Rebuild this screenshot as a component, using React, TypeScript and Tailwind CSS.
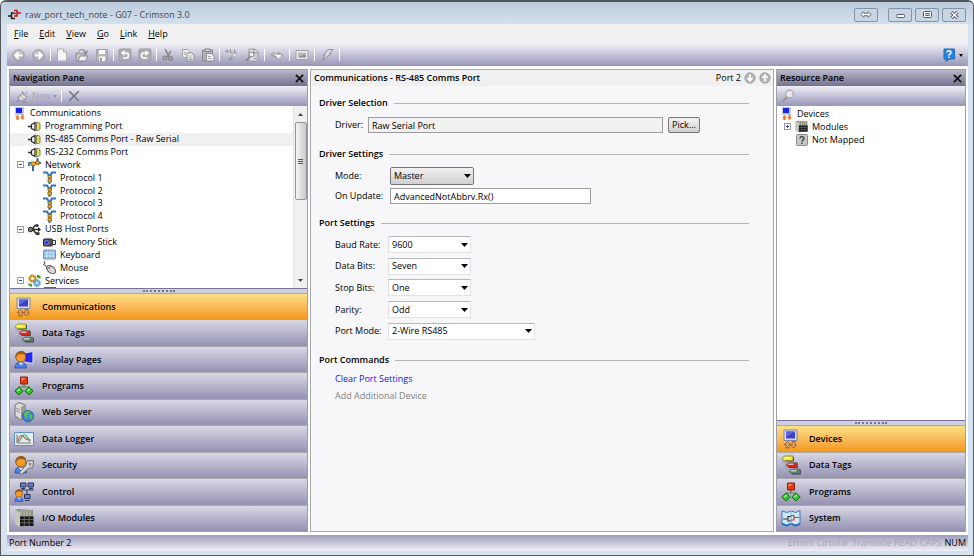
import type { ReactNode } from "react";

const G = "#8b8b90";

function Svg({ w, h = w, box, children }: { w: number; h?: number; box?: string; children: ReactNode }) {
  return (
    <svg width={w} height={h} viewBox={box ?? `0 0 ${w} ${h}`} className="block shrink-0" aria-hidden="true">
      {children}
    </svg>
  );
}

/* ---------- window and toolbar icons ---------- */

const LogoIcon = () => (
  <Svg w={13} h={11}>
    <path d="M0 7h4M6 4H3.500V9.500H7" fill="none" stroke="#222" strokeWidth="1.500" />
    <path d="M13 4H9.500M6 1.500h3v5.500H6M6 4.500h2" fill="none" stroke="#c4161c" strokeWidth="1.600" />
  </Svg>
);

const Round = ({ rotate }: { rotate: number }) => (
  <Svg w={13} box="0 0 14 14">
    <circle cx="7" cy="7" r="6.200" fill="#b4b4b8" stroke="#98989c" />
    <path d="M1.500 7a5.500 5.500 0 0 1 11 0" fill="#c6c6c9" />
    <path d="M11 7H4M7 3.500L3.500 7 7 10.500" fill="none" stroke="#fff" strokeWidth="2" transform={`rotate(${rotate} 7 7)`} />
  </Svg>
);

const NewFile = () => (
  <Svg w={14}>
    <path d="M2.500 1h6l3 3v9h-9z" fill="#f4f4f4" stroke="#b0b0b4" />
    <path d="M8.500 1v3h3" fill="#d0d0d0" stroke="#b0b0b4" />
  </Svg>
);
const OpenFile = () => (
  <Svg w={14}>
    <path d="M1 5h4l1 1h4v7H1z" fill="#c9c9cc" stroke={G} />
    <path d="M3 13l2-5h8l-2.500 5z" fill="#f0f0f0" stroke={G} />
    <path d="M4 3c3-3 6-1 7 2M12.500 2.500L11.200 6 8.500 4" fill="none" stroke={G} strokeWidth="1.200" />
  </Svg>
);
const SaveFile = () => (
  <Svg w={14}>
    <path d="M1.500 1.500h11v11h-11z" fill="#b8b8bc" stroke="#a0a0a5" />
    <path d="M4 2h6v4H4zM4 8.500h6V13H4z" fill="#fafafa" />
    <path d="M5 10h2v3H5z" fill="#96969b" />
  </Svg>
);
const Turn = ({ flip }: { flip?: boolean }) => (
  <Svg w={14}>
    <rect x="1" y="1" width="12" height="12" rx="1" fill="#adadb1" stroke="#9c9ca0" />
    <g transform={flip ? "translate(14 0) scale(-1 1)" : undefined}>
      <path d="M4.500 5H8a2.500 2.500 0 0 1 0 5H5" fill="none" stroke="#fff" strokeWidth="1.600" />
      <path d="M3 5l3.500-3v6z" fill="#fff" />
    </g>
  </Svg>
);
const Cut = () => (
  <Svg w={14}>
    <path d="M4 1l4.500 8M10 3L6 9" stroke="#8a8a8f" strokeWidth="1.600" />
    <circle cx="4" cy="10" r="1.800" fill="none" stroke="#88888d" strokeWidth="1.400" />
    <circle cx="9.500" cy="10.500" r="1.800" fill="none" stroke="#88888d" strokeWidth="1.400" />
  </Svg>
);
const Copy = () => (
  <Svg w={14}>
    <path d="M1.500 1.500h5l2 2v6h-7z" fill="#ededee" stroke="#a0a0a5" />
    <path d="M6 5h4.500L13 7v6H6z" fill="#f2f2f3" stroke="#909095" />
    <path d="M3 4.500h2M3 6.500h2M7.500 8h3M7.500 10h4M7.500 11.500h4" stroke="#a5a5aa" />
  </Svg>
);
const Paste = () => (
  <Svg w={14}>
    <path d="M1.500 2h10v11h-10z" fill="#b2b2b6" stroke="#88888c" />
    <path d="M4 1h5v2.500H4z" fill="#d8d8da" stroke="#808085" />
    <path d="M5.500 5.500h5L13 8v5H5.500z" fill="#f3f3f4" stroke="#909095" />
    <path d="M7 8.500h3M7 10.500h4" stroke="#a5a5aa" />
  </Svg>
);
const FindAll = () => (
  <Svg w={14}>
    <path d="M1 4.500V2.500l1-1 1 1v2M1 3.500h2M5.500 1v3.500h2M9.500 1v3.500h2" fill="none" stroke="#909096" />
    <path d="M4 12.500l4-4" stroke="#96969b" strokeWidth="2" />
    <path d="M6.500 6l4 4M7 8l2-3 2.500 2.500-3 2z" fill="#f4f4f4" stroke="#b4b4b9" />
  </Svg>
);
const FindPage = () => (
  <Svg w={14}>
    <path d="M4 1h6l3 3v9H4z" fill="#e2e2e4" stroke="#98989d" />
    <path d="M9 1v4h4M10 8h2M9 10.500h3" fill="none" stroke="#88888d" />
    <circle cx="6.500" cy="6.500" r="2.500" fill="#f4f4f4" stroke="#7d7d82" />
    <path d="M5 8.500l-4 4.500" stroke="#85858a" strokeWidth="1.800" />
  </Svg>
);
const Hand = () => (
  <Svg w={14}>
    <path d="M0 6l3-2 3 1 3-1 5 3-3 3-4 1.500-3-2-4-1z" fill="#b0b0b4" />
    <path d="M4 6l3 2 2-2 2 2-3 2z" fill="#fafafa" stroke="#fafafa" />
    <path d="M4 7.500l3 2M8 5.500l2 1" stroke="#88888d" />
  </Svg>
);
const Picture = () => (
  <Svg w={14}>
    <path d="M1 2.500h12v9H1z" fill="#f1f1f2" stroke="#9d9da2" />
    <path d="M3 4.500h8v5H3z" fill="#b9b9bd" />
    <path d="M3 9.500l4-2 4-1v3z" fill="#909095" />
  </Svg>
);
const Bolt = () => (
  <Svg w={14}>
    <path d="M8 1.500h5L9.500 5.500H11L2 13l3-5.500H3.500z" fill="#dcdcde" stroke="#909095" />
  </Svg>
);
const HelpIcon = () => (
  <Svg w={12} h={14}>
    <path d="M1 1h10.500v10H6l-3 2.500V11H1z" fill="#2783dc" stroke="#1c6ac0" />
    <path d="M4 4.500C4 2 8 2 8 4.500 8 6 6 5.700 6 7.500M6 8.500V10" fill="none" stroke="#fff" strokeWidth="1.500" />
  </Svg>
);
const PlugIcon = () => (
  <Svg w={13}>
    <path d="M1 12l3-3M7 1l2 3M11 4l1-2" stroke="#8f8f94" />
    <path d="M3 7l5-4 4 4-4 4-4 .500z" fill="#c6c6ca" stroke="#919196" />
    <path d="M5 7l2 2M7 5l3 3" stroke="#fff" />
    <path d="M8 12h4" stroke="#919196" strokeWidth="1.500" />
  </Svg>
);
const MagIcon = () => (
  <Svg w={14}>
    <circle cx="8.500" cy="5" r="3.800" fill="#e9e9ee" stroke="#a2a2a6" strokeWidth="1.200" />
    <path d="M6 8l-5 5" stroke="#96969b" strokeWidth="1.800" />
  </Svg>
);
const Cross = ({ color = "#111", w = 9, sw = 2 }: { color?: string; w?: number; sw?: number }) => (
  <Svg w={w} box="0 0 10 10">
    <path d="M1 1l8 8M9 1L1 9" stroke={color} strokeWidth={sw} />
  </Svg>
);

/* ---------- tree icons (13px) ---------- */

const PcSmall = () => (
  <Svg w={12} h={13}>
    <path d="M1 0h9v8H1z" fill="#c3c6dd" />
    <path d="M2 1h6v5H2z" fill="#1525e8" />
    <path d="M3.500 8L6 10.500H4.700V13H2.300v-2.500H1zM8.500 13L6 10.500h1.300V8h2.400v2.500H11z" fill="#ee7f22" />
  </Svg>
);
const PortSmall = () => (
  <Svg w={13}>
    <path d="M0 6.500h4" stroke="#333" strokeWidth="1.600" />
    <path d="M7 2.500v8L3.500 8.500v-4z" fill="#fff" stroke="#222" strokeWidth="1.200" />
    <path d="M8.500 2.500h2l1.500 1v6l-1.500 1h-2z" fill="#e6de5a" stroke="#66663a" strokeWidth=".8" />
  </Svg>
);
const NetSmall = () => (
  <Svg w={13}>
    <path d="M0 5h13M5 5v8M9.500 0v5" stroke="#2b6cb8" strokeWidth="2" />
    <path d="M3 4h4v3.500H3zM8 3h3v3.500H8z" fill="#f3b32c" stroke="#8a5a10" strokeWidth=".8" />
    <path d="M0 4h2v4H0z" fill="#3b83cf" />
  </Svg>
);
const ProtoSmall = () => (
  <Svg w={13}>
    <path d="M0 1.500h4l2.500 4 2.500-4h4M6.500 5v8" fill="none" stroke="#2f74bd" strokeWidth="2" />
    <path d="M5 4.500h3.500v2.500H5zM5 8h3.500v3H5z" fill="#f0b030" stroke="#7a5a20" strokeWidth=".8" />
  </Svg>
);
const UsbSmall = () => (
  <Svg w={13}>
    <path d="M2 6.500h10M4 6.500l3-4h2.500M5 6.500l3 4h2" fill="none" stroke="#333" strokeWidth="1.600" />
    <circle cx="2.500" cy="6.500" r="2.300" fill="#777" stroke="#222" />
    <path d="M10 4l3 2.500L10 9z" fill="#222" />
    <circle cx="9" cy="2.500" r="1.600" fill="#333" />
    <path d="M8 9.200h3.500V12H8z" fill="#333" />
  </Svg>
);
const StickSmall = () => (
  <Svg w={13}>
    <rect x=".5" y="3" width="9" height="7" rx="1" fill="#55555d" stroke="#222" />
    <circle cx="3.500" cy="6.500" r="2" fill="#2323ef" stroke="#9fa4ff" strokeWidth=".7" />
    <path d="M9.500 4.500h3v4h-3z" fill="#e8e8e8" stroke="#333" />
  </Svg>
);
const KeySmall = () => (
  <Svg w={13}>
    <rect x=".5" y="2" width="12" height="9" rx="1" fill="#7eb2e0" stroke="#8a8f98" />
    <path d="M1 5h11M1 8h11M4 2.500v8M7 2.500v8M10 2.500v8" stroke="#d9edfb" strokeWidth=".9" />
  </Svg>
);
const MouseSmall = () => (
  <Svg w={13}>
    <path d="M1 0l1 2-1.500 1.500L3 5" fill="none" stroke="#444" />
    <ellipse cx="8" cy="8.500" rx="5.200" ry="3.200" transform="rotate(38 8 8.500)" fill="#d8d8d8" stroke="#555" />
    <path d="M4 8l4-3M4 5.500l3 2" stroke="#666" strokeWidth=".8" />
  </Svg>
);
const GearsSmall = () => (
  <Svg w={13}>
    <circle cx="4.500" cy="4.500" r="3" fill="#f3cf78" stroke="#d0901a" strokeWidth="2.600" strokeDasharray="1.700 .6" />
    <circle cx="4.500" cy="4.500" r="2.600" fill="none" stroke="#c98a14" />
    <circle cx="4.500" cy="4.500" r="1.200" fill="#fff" />
    <circle cx="9" cy="9" r="2.600" fill="#cfe6fa" stroke="#3f92dc" strokeWidth="2.400" strokeDasharray="1.500 .5" />
    <path d="M9 .500l3.500 1.500v3L9 3.500zM.500 9L4 10.500V13L.500 11.500z" fill="#35a03a" />
  </Svg>
);
const RackSmall = () => (
  <Svg w={13} box="0 0 20 20">
    <Rack />
  </Svg>
);
const UnknownSmall = () => (
  <Svg w={12}>
    <rect x=".5" y=".5" width="11" height="11" rx="1" fill="#c8c8c8" stroke="#8a8a8a" />
    <path d="M4 4.500C4 2 8 2 8 4.500 8 6 6 5.700 6 7.500M6 8.500V10" fill="none" stroke="#333" strokeWidth="1.300" />
  </Svg>
);

/* ---------- category icons (20px) ---------- */

const Rack = () => (
  <>
    <path d="M1 2l4-1 14 1v15l-12 2-6-3z" fill="#8d9181" />
    <path d="M1 2l5 2v15l-5-3z" fill="#c5c9b9" />
    <path d="M7 2v6M10 2v6M13 2v6M16 2v6" stroke="#c3c6ba" />
    <path d="M6 8.500h13.500V18H6z" fill="#161616" />
    <path d="M6 11.500h13M6 14.800h13M10.300 9v9M15 9v9" stroke="#777" strokeWidth=".8" />
  </>
);
const PcIcon = () => (
  <Svg w={20}>
    <path d="M3 1h13v10.500H3z" fill="#dcdcea" stroke="#8485a5" />
    <path d="M5 2.500h9v7H5z" fill="#3a42cf" />
    <path d="M5 2.500h9L5 8z" fill="#6067dc" />
    <path d="M6.500 12.500l3 3H8V19H5v-3.500H3.500zM12.500 19l-3-3H11v-3.500h3V16h1.500z" fill="#e0a36c" stroke="#8a5128" strokeWidth=".8" />
  </Svg>
);
const Tag = ({ x, y, c }: { x: number; y: number; c: string }) => (
  <g transform={`translate(${x} ${y})`}>
    <path d="M2.500 0H11v5H2.500L0 2.500z" fill={c} stroke="#6b6b6b" strokeWidth=".7" />
    <path d="M2.500 1h5v1.500H1.500z" fill="#fff" opacity=".65" />
    <path d="M3 5h8.500V1" fill="none" stroke="#333" strokeWidth=".7" />
  </g>
);
const TagsIcon = () => (
  <Svg w={20}>
    <path d="M2 3v4l4 2M5 9v4l4 3" fill="none" stroke="#999" strokeWidth=".8" />
    <Tag x={1} y={1} c="#f7ec1b" />
    <Tag x={5} y={7.5} c="#d9261c" />
    <Tag x={8} y={14} c="#5f7f6c" />
  </Svg>
);
const Person = () => (
  <>
    <path d="M1 18c0-4 2-6 5.500-6s6 2 6 6z" fill="#4a7de8" stroke="#244a9c" strokeWidth=".8" />
    <path d="M4.500 12.500l2.500 3 2.500-3z" fill="#dbe8ff" />
    <circle cx="6.800" cy="7" r="5" fill="#f59a2a" stroke="#8d4a0b" strokeWidth=".8" />
    <path d="M1.500 8C1 3 4 1 7 1s5.500 1.500 5 5C10 3.500 6 4 4 4.500z" fill="#9a5a18" />
  </>
);
const DisplayIcon = () => (
  <Svg w={20}>
    <path d="M10 3l9-1.500v12L10 12z" fill="#2727f2" stroke="#d8d8f4" strokeWidth="1.200" />
    <Person />
  </Svg>
);
const ProgramsIcon = () => (
  <Svg w={20}>
    <path d="M10 7v4M5 15v-4h10v4" fill="none" stroke="#4b8b45" strokeWidth="1.200" />
    <path d="M6.500 1h7v7h-7z" fill="#e93a18" stroke="#8f1c08" />
    <path d="M7.500 2h4L7.500 5z" fill="#ff8a68" />
    <path d="M5 11l4.200 4L5 19 .800 15zM15 11l4.200 4-4.200 4-4.200-4z" fill="#32c328" stroke="#14700f" />
    <path d="M5 12.500l1.500 1.500-3 1.500-1-.700zM15 12.500l1.500 1.500-3 1.500-1-.700z" fill="#90f088" />
  </Svg>
);
const ServerIcon = () => (
  <Svg w={20}>
    <path d="M1 3l4-2.500 6 2.500v13l-4 2-6-4z" fill="#dcdcdc" stroke="#6e6e6e" />
    <path d="M7 5l4-2v13l-4 2z" fill="#9b9b9b" />
    <path d="M2 6l4 2M2 8.500l4 2" stroke="#8a8a8a" />
    <circle cx="14" cy="14" r="5.500" fill="#3d86e0" stroke="#184a90" strokeWidth=".8" />
    <path d="M10 11c2-2 4-2.500 6-2l-1 2.500-2 1 1 2-2 2c-1-1-2-3-2-5.500zM16 12l3 1-1 4-2 .500-.500-3z" fill="#5ec24a" />
  </Svg>
);
const LoggerIcon = () => (
  <Svg w={20}>
    <path d="M.500 3.500h19v13H.500z" fill="#e3edf6" stroke="#5d8fc6" />
    <path d="M3 5.500v8.500h14" fill="none" stroke="#555" strokeWidth=".8" />
    <path d="M3.500 12c2-6 4-7 7-3.500s4 2 6 2.500" fill="none" stroke="#e0564a" strokeWidth="1.200" />
    <path d="M3.500 13c4-1 4-7.500 7-7.500s3 5 6 7" fill="none" stroke="#3fa55c" strokeWidth="1.200" />
  </Svg>
);
const SecurityIcon = () => (
  <Svg w={20}>
    <Person />
    <path d="M13 6l6.500-.500-.500 7-4.500 1-7 6-2-2 6-6.500z" fill="#d2d2d2" stroke="#6d6d6d" />
    <path d="M14.500 8l3 .500-1.500 3z" fill="#77777c" />
    <path d="M12.500 11.500L7 17" stroke="#fff" />
  </Svg>
);
const ControlIcon = () => (
  <Svg w={20}>
    <path d="M9.500 5.500V8M16.500 5.500V8M7 8h13M13 8v5" fill="none" stroke="#383e64" strokeWidth="1.200" />
    <path d="M6.500 1H12v4H6.500zM14 1h5.500v4H14zM10.500 12.500H16v4h-5.500z" fill="#6088c8" stroke="#2c3358" />
    <path d="M11 18.500h4.500M7 6.500h4M15 6.500h4" stroke="#2c3358" />
    <g transform="translate(0 6.500) scale(.72)">
      <Person />
    </g>
  </Svg>
);
const RackIcon = () => (
  <Svg w={20}>
    <Rack />
  </Svg>
);
const SystemIcon = () => (
  <Svg w={20}>
    <path d="M1 3l5 1.500 4-1.500 4.500 1.500L19 2.500v14L14.500 18 10 16l-4 2-5-1.500z" fill="#cfe8f8" stroke="#3f78bb" />
    <path d="M1 15.500l5 2 4-2 4.500 2 4.500-2" fill="none" stroke="#2c6cc0" strokeWidth="1.600" />
    <path d="M10 3v13" stroke="#7fb2dc" />
    <path d="M2 11h4M10 8.500H7v4.500h3" fill="none" stroke="#333" strokeWidth="1.200" />
    <path d="M10 7.500h3v4.500h-3M13 9.500h5" fill="none" stroke="#d03a30" strokeWidth="1.200" />
  </Svg>
);

/* ---------- shared pieces ---------- */

const Sep = () => <span className="h-3 w-px shrink-0 bg-white" />;

function PaneTitle({ children }: { children: string }) {
  return (
    <header className="flex h-4 shrink-0 items-center justify-between bg-linear-to-b from-[#b9b8cb] to-[#74728f] px-[3px] text-[#000]">
      <h2 className="font-semibold">{children}</h2>
      <button type="button" aria-label={`Close ${children}`}>
        <Cross />
      </button>
    </header>
  );
}

function Splitter() {
  return (
    <div className="flex h-[5px] shrink-0 items-center justify-center border-t border-[#77759a] bg-[#cfcfdf]">
      <span className="w-8 border-t-2 border-dotted border-[#77758c]" />
    </div>
  );
}

type Category = { label: string; icon: ReactNode };

function Categories({ items }: { items: Category[] }) {
  return (
    <nav className="grid auto-rows-fr">
      {items.map((c, i) => (
        <button
          type="button"
          key={c.label}
          className={`flex min-h-0 items-center gap-2 border-t border-[#a9a7a9] pl-1 text-left font-semibold ${
            i === 0 ? "bg-linear-to-b from-[#fbdf86] to-[#f39813]" : "bg-linear-to-b from-[#d9d8e6] to-[#9492b2]"
          }`}
        >
          {c.icon}
          <span>{c.label}</span>
        </button>
      ))}
    </nav>
  );
}

type Node = { label: string; icon: ReactNode; level: 0 | 1 | 2; box?: "+" | "-"; selected?: boolean };

const indent = { 0: "pl-[3px]", 1: "pl-[5px]", 2: "pl-[33px]" };

function TreeRow({ node }: { node: Node }) {
  return (
    <li className={`flex min-h-0 items-center ${indent[node.level]} ${node.selected ? "bg-[#f0f0f0]" : ""}`}>
      {node.level === 1 && (
        <span className="mr-1 flex w-[9px] justify-end">
          {node.box && (
            <Svg w={7}>
              <rect x=".5" y=".5" width="6" height="6" fill="#fff" stroke="#9a9aa8" />
              <path d={node.box === "+" ? "M2 3.500h3M3.500 2v3" : "M2 3.500h3"} stroke="#3a4d9a" />
            </Svg>
          )}
        </span>
      )}
      <span className="flex w-[13px] justify-center">{node.icon}</span>
      <span className="ml-1 whitespace-nowrap">{node.label}</span>
    </li>
  );
}

function Heading({ children }: { children: string }) {
  return (
    <div className="flex h-4 items-center gap-[6px]">
      <h3 className="font-semibold">{children}</h3>
      <span className="h-px flex-1 bg-[#b5b5b8]" />
    </div>
  );
}

function Combo({ id, value, look, width }: { id: string; value: string; look: string; width: string }) {
  return (
    <span className={`relative block ${width}`}>
      <select id={id} defaultValue={value} className={`block w-full appearance-none border pl-[3px] ${look}`}>
        <option>{value}</option>
      </select>
      <svg width="7" height="4" viewBox="0 0 7 4" className="pointer-events-none absolute top-1/2 right-[3px] -translate-y-1/2" aria-hidden="true">
        <path d="M0 0h7L3.500 4z" fill="#000" />
      </svg>
    </span>
  );
}

const flat = "h-[17px] border-[#e0e2e8] border-t-[#b5b8c0] bg-white";

/* ---------- data ---------- */

const tree: Node[] = [
  { label: "Communications", icon: <PcSmall />, level: 0 },
  { label: "Programming Port", icon: <PortSmall />, level: 1 },
  { label: "RS-485 Comms Port - Raw Serial", icon: <PortSmall />, level: 1, selected: true },
  { label: "RS-232 Comms Port", icon: <PortSmall />, level: 1 },
  { label: "Network", icon: <NetSmall />, level: 1, box: "-" },
  { label: "Protocol 1", icon: <ProtoSmall />, level: 2 },
  { label: "Protocol 2", icon: <ProtoSmall />, level: 2 },
  { label: "Protocol 3", icon: <ProtoSmall />, level: 2 },
  { label: "Protocol 4", icon: <ProtoSmall />, level: 2 },
  { label: "USB Host Ports", icon: <UsbSmall />, level: 1, box: "-" },
  { label: "Memory Stick", icon: <StickSmall />, level: 2 },
  { label: "Keyboard", icon: <KeySmall />, level: 2 },
  { label: "Mouse", icon: <MouseSmall />, level: 2 },
  { label: "Services", icon: <GearsSmall />, level: 1, box: "-" },
];

const resources: Node[] = [
  { label: "Devices", icon: <PcSmall />, level: 0 },
  { label: "Modules", icon: <RackSmall />, level: 1, box: "+" },
  { label: "Not Mapped", icon: <UnknownSmall />, level: 1 },
];

const navItems: Category[] = [
  { label: "Communications", icon: <PcIcon /> },
  { label: "Data Tags", icon: <TagsIcon /> },
  { label: "Display Pages", icon: <DisplayIcon /> },
  { label: "Programs", icon: <ProgramsIcon /> },
  { label: "Web Server", icon: <ServerIcon /> },
  { label: "Data Logger", icon: <LoggerIcon /> },
  { label: "Security", icon: <SecurityIcon /> },
  { label: "Control", icon: <ControlIcon /> },
  { label: "I/O Modules", icon: <RackIcon /> },
];

const resourceItems: Category[] = [
  { label: "Devices", icon: <PcIcon /> },
  { label: "Data Tags", icon: <TagsIcon /> },
  { label: "Programs", icon: <ProgramsIcon /> },
  { label: "System", icon: <SystemIcon /> },
];

const toolGroups: { name: string; icon: ReactNode }[][] = [
  [
    { name: "Back", icon: <Round rotate={0} /> },
    { name: "Forward", icon: <Round rotate={180} /> },
  ],
  [
    { name: "New", icon: <NewFile /> },
    { name: "Open", icon: <OpenFile /> },
    { name: "Save", icon: <SaveFile /> },
  ],
  [
    { name: "Undo", icon: <Turn /> },
    { name: "Redo", icon: <Turn flip /> },
  ],
  [
    { name: "Cut", icon: <Cut /> },
    { name: "Copy", icon: <Copy /> },
    { name: "Paste", icon: <Paste /> },
  ],
  [
    { name: "Find all", icon: <FindAll /> },
    { name: "Find in page", icon: <FindPage /> },
  ],
  [{ name: "Browse", icon: <Hand /> }],
  [{ name: "Picture", icon: <Picture /> }],
  [{ name: "Send", icon: <Bolt /> }],
];

const portSettings = [
  { id: "baud", label: "Baud Rate:", value: "9600", width: "w-[83px]" },
  { id: "bits", label: "Data Bits:", value: "Seven", width: "w-[83px]" },
  { id: "stop", label: "Stop Bits:", value: "One", width: "w-[83px]" },
  { id: "parity", label: "Parity:", value: "Odd", width: "w-[83px]" },
  { id: "portmode", label: "Port Mode:", value: "2-Wire RS485", width: "w-[147px]" },
];

const menus = ["File", "Edit", "View", "Go", "Link", "Help"];

const capButton = "flex h-[14px] w-6 items-center justify-center rounded-xs border border-[#8593a6] bg-[#c7d5e5]";
const strip = "bg-linear-to-b from-[#f1f0f6] to-[#9896b8]";

export default function App() {
  return (
    <div className="h-screen bg-white pb-1 font-['Open_Sans','Noto_Sans',sans-serif] text-[9px] leading-3 text-[#000]">
      <div className="flex h-full flex-col rounded-t-md border border-t-2 border-[#55575c] bg-[#d5e3f1] pr-[5px] pb-1 pl-[6px]">
        <div className="-mr-[5px] -ml-[6px] flex h-[22px] shrink-0 items-center rounded-t-sm bg-linear-to-b from-[#bccbdb] to-[#d3e1ef] pt-[3px] pr-[7px] pl-[7px]">
          <LogoIcon />
          <h1 className="ml-1 text-[#3c4653]">raw_port_tech_note - G07 - Crimson 3.0</h1>
          <div className="ml-auto flex gap-[3px]">
            <button type="button" aria-label="Resize" className={`mr-[7px] ${capButton}`}>
              <Svg w={12} h={7}>
                <path d="M.700 3.500L4 .700v1.600h4V.700l3.300 2.800L8 6.300V4.700H4v1.600z" fill="#fff" stroke="#667" strokeWidth=".9" />
              </Svg>
            </button>
            <button type="button" aria-label="Minimize" className={capButton}>
              <Svg w={9} h={7}>
                <rect x=".5" y="3.500" width="8" height="3" rx="1" fill="#fff" stroke="#556" />
              </Svg>
            </button>
            <button type="button" aria-label="Maximize" className={capButton}>
              <Svg w={9} h={7}>
                <rect x=".5" y=".5" width="8" height="6" rx="1" fill="#fff" stroke="#556" />
                <rect x="3" y="2.500" width="3" height="2" fill="#dde" stroke="#556" />
              </Svg>
            </button>
            <button type="button" aria-label="Close" className={capButton}>
              <Svg w={9} h={8}>
                <path d="M1.500 1l6 6M7.500 1l-6 6" stroke="#556" strokeWidth="3.200" />
                <path d="M1.700 1.200l5.600 5.600M7.300 1.200L1.700 6.800" stroke="#fff" strokeWidth="1.400" />
              </Svg>
            </button>
          </div>
        </div>

        <nav className="flex h-5 shrink-0 items-center gap-[11px] bg-[#f0f0f0] pl-[7px]">
          {menus.map((m) => (
            <button type="button" key={m}>
              <u>{m[0]}</u>
              {m.slice(1)}
            </button>
          ))}
        </nav>

        <div className={`flex h-[22px] shrink-0 items-center pr-[5px] pl-1 ${strip}`}>
          {toolGroups.map((group, i) => (
            <div key={i} className="flex items-center">
              <div className={`flex gap-[6px] ${i > 3 ? "px-[5px]" : i > 0 ? "px-1" : "pr-[5px]"}`}>
                {group.map((t) => (
                  <button type="button" key={t.name} aria-label={t.name} className="flex w-[14px] justify-center">
                    {t.icon}
                  </button>
                ))}
              </div>
              <Sep />
            </div>
          ))}
          <button type="button" aria-label="Help" className="ml-auto flex items-center gap-1">
            <HelpIcon />
            <Svg w={4} h={3}>
              <path d="M0 0h4L2 3z" fill="#000" />
            </Svg>
          </button>
        </div>

        <div className="flex min-h-0 flex-1 gap-[2px] bg-white px-[2px] pt-[3px] pb-[3px]">
          <aside className="flex w-[299px] shrink-0 flex-col border border-[#9d9dab] bg-white">
            <PaneTitle>Navigation Pane</PaneTitle>
            <div className={`flex h-5 shrink-0 items-center pl-[5px] ${strip}`}>
              <PlugIcon />
              <button type="button" className="mr-1 ml-1 flex items-center gap-[2px] text-[#a3a2b4]">
                New
                <Svg w={4} h={3}>
                  <path d="M0 0h4L2 3z" fill="#96959f" />
                </Svg>
              </button>
              <Sep />
              <button type="button" aria-label="Delete" className="ml-[6px]">
                <Cross color="#75757c" w={12} sw={1.3} />
              </button>
            </div>
            <div className="flex min-h-0 flex-1">
              <div className="min-w-0 flex-1 overflow-hidden pt-px">
                <ul className="grid h-[180px] auto-rows-fr">
                  {tree.map((n) => (
                    <TreeRow key={n.label} node={n} />
                  ))}
                </ul>
                <div className="ml-[34px] h-1 w-3 bg-[#b83a40]" />
              </div>
              <div className="flex w-[14px] flex-col items-center border-l border-[#e4e4e4] bg-[#f0f0f0]">
                <span className="flex h-4 items-center">
                  <Svg w={5} h={3}>
                    <path d="M0 3h5L2.500 0z" fill="#444" />
                  </Svg>
                </span>
                <div className="flex h-[78px] w-3 flex-col items-center justify-center gap-px rounded-xs border border-[#94949a] bg-linear-to-r from-[#f5f5f5] to-[#c9c9ce]">
                  <span className="h-px w-[5px] bg-[#555]" />
                  <span className="h-px w-[5px] bg-[#555]" />
                  <span className="h-px w-[5px] bg-[#555]" />
                </div>
                <span className="mt-auto flex h-4 items-center">
                  <Svg w={5} h={3}>
                    <path d="M0 0h5L2.500 3z" fill="#444" />
                  </Svg>
                </span>
              </div>
            </div>
            <Splitter />
            <div className="grid h-[238px] shrink-0">
              <Categories items={navItems} />
            </div>
          </aside>

          <main className="min-w-0 flex-1 border border-[#a9a9b0] bg-[#f7f7f9]">
            <header className="flex h-4 items-center gap-[3px] bg-[#f0f0f0] pr-[2px] pl-[3px]">
              <h2 className="mr-auto font-semibold">Communications - RS-485 Comms Port</h2>
              <span>Port 2</span>
              <button type="button" aria-label="Next port">
                <Svg w={12} box="0 0 14 14">
                  <circle cx="7" cy="7" r="6" fill="#b5b5b5" stroke="#989898" />
                  <path d="M7 3v7M4 7l3 3.500L10 7" fill="none" stroke="#fff" strokeWidth="2" />
                </Svg>
              </button>
              <button type="button" aria-label="Previous port">
                <Svg w={12} box="0 0 14 14">
                  <circle cx="7" cy="7" r="6" fill="#b5b5b5" stroke="#989898" />
                  <path d="M7 11V4M4 7l3-3.500L10 7" fill="none" stroke="#fff" strokeWidth="2" />
                </Svg>
              </button>
            </header>
            <div className="pt-[9px] pr-6 pl-2">
              <Heading>Driver Selection</Heading>
              <div className="mt-[6px] flex h-4 items-center pr-[49px] pl-4">
                <label htmlFor="driver" className="w-[33px]">
                  Driver:
                </label>
                <input id="driver" readOnly defaultValue="Raw Serial Port" className="h-4 min-w-0 flex-1 border border-[#9b9ba2] bg-[#f1f1f1] px-[3px]" />
                <button type="button" className="ml-[5px] h-4 w-8 rounded-xs border border-[#77777b] bg-linear-to-b from-[#f3f3f3] to-[#cfcfcf] text-center leading-3">
                  Pick...
                </button>
              </div>

              <div className="mt-[13px]">
                <Heading>Driver Settings</Heading>
              </div>
              <div className="mt-1 flex h-5 items-center pl-4">
                <label htmlFor="mode" className="w-[55px]">
                  Mode:
                </label>
                <Combo id="mode" value="Master" width="w-[84px]" look="h-[18px] rounded-xs border-[#77777b] bg-linear-to-b from-[#f1f1f1] to-[#d0d0d0]" />
              </div>
              <div className="flex h-5 items-center pl-4">
                <label htmlFor="update" className="w-[55px]">
                  On Update:
                </label>
                <input id="update" defaultValue="AdvancedNotAbbrv.Rx()" className="h-4 w-[201px] border border-[#9b9ba2] bg-white px-[3px]" />
              </div>

              <div className="mt-[9px]">
                <Heading>Port Settings</Heading>
              </div>
              <div className="mt-[3px] grid h-[108px] auto-rows-fr pl-4">
                {portSettings.map((p) => (
                  <div key={p.id} className="flex min-h-0 items-center">
                    <label htmlFor={p.id} className="w-[53px] whitespace-nowrap">
                      {p.label}
                    </label>
                    <Combo id={p.id} value={p.value} width={p.width} look={flat} />
                  </div>
                ))}
              </div>

              <div className="mt-[10px]">
                <Heading>Port Commands</Heading>
              </div>
              <div className="mt-[5px] flex flex-col items-start gap-[5px] pl-4">
                <a href="#clear" className="text-[#1a12f0]">
                  Clear Port Settings
                </a>
                <span className="text-[#808080]">Add Additional Device</span>
              </div>
            </div>
          </main>

          <aside className="flex w-[190px] shrink-0 flex-col border border-[#9d9dab] bg-white">
            <PaneTitle>Resource Pane</PaneTitle>
            <div className={`flex h-5 shrink-0 items-center pl-1 ${strip}`}>
              <button type="button" aria-label="Search">
                <MagIcon />
              </button>
            </div>
            <ul className="grid min-h-0 flex-1 auto-rows-[13px] content-start pt-px">
              {resources.map((n) => (
                <TreeRow key={n.label} node={n} />
              ))}
            </ul>
            <Splitter />
            <div className="grid h-[106px] shrink-0">
              <Categories items={resourceItems} />
            </div>
          </aside>
        </div>

        <footer className="flex h-4 shrink-0 items-center gap-[3px] bg-linear-to-b from-[#9f9dbc] to-[#f1f0f6] px-[2px]">
          <span className="mr-auto">Port Number 2</span>
          {["Errors", "Circular", "Translate", "READ", "CAPS"].map((s) => (
            <span key={s} className="text-[#a5a4b3]">
              {s}
            </span>
          ))}
          <span>NUM</span>
        </footer>
      </div>
    </div>
  );
}
